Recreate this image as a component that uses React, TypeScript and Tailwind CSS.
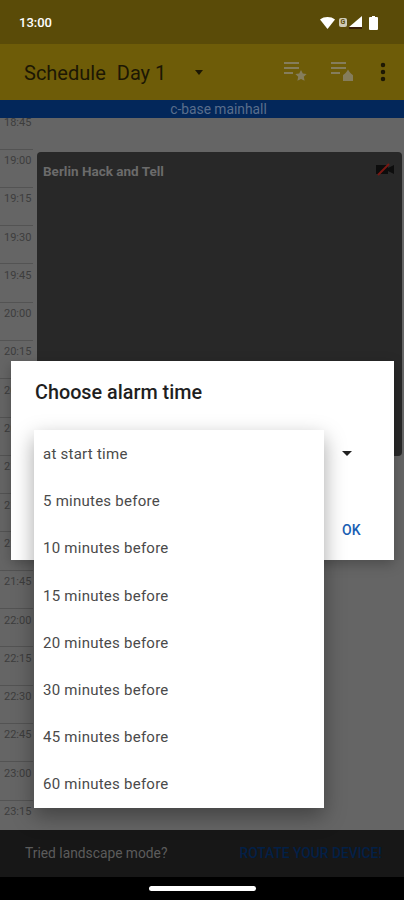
import { MoreVertical } from "lucide-react";

const times = ["19:00","19:15","19:30","19:45","20:00","20:15","20:30","20:45","21:00","21:15","21:30","21:45","22:00","22:15","22:30","22:45","23:00","23:15"];
const options = ["at start time","5 minutes before","10 minutes before","15 minutes before","20 minutes before","30 minutes before","45 minutes before","60 minutes before"];

const StatusIcons = () => (
  <div className="flex items-center gap-[2px]">
    <svg width="15" height="12" viewBox="0 0 15 12"><path d="M0 2.5C4-.8 11-.8 15 2.5L7.5 12z" fill="#fff" /></svg>
    <span className="ml-[2px] flex h-[9px] w-[8px] items-center justify-center rounded-[2px] bg-[#cfcbb8] text-[7px] font-bold leading-none text-[#5a4b08]">G</span>
    <svg width="13" height="13" viewBox="0 0 13 13"><path d="M13 0v11H0z" fill="#fff" /><path d="M0 11h13v2H0z" fill="#3a1f0a" /></svg>
    <svg className="ml-[5px]" width="9" height="14" viewBox="0 0 9 14"><path d="M3 0h3v1h2a1 1 0 0 1 1 1v11a1 1 0 0 1-1 1H1a1 1 0 0 1-1-1V2a1 1 0 0 1 1-1h2z" fill="#fff" /></svg>
  </div>
);

const ListIcon = ({ lock }: { lock?: boolean }) => (
  <svg width="24" height="22" viewBox="0 0 24 22" fill="#857d5c">
    <path d="M1 1h15v2H1zM1 6h15v2H1zM1 11h9v2H1z" />
    {lock ? (
      <path d="M13 20v-5.500c0-1 3-2 5-6 2 4 5 5 5 6V20z" />
    ) : (
      <path d="M18 9l1.800 3.600 3.900.5-2.900 2.700.8 4L18 17.900l-3.600 1.900.8-4-2.900-2.700 3.900-.5z" />
    )}
  </svg>
);

const NoVideoIcon = () => (
  <svg width="20" height="14" viewBox="0 0 20 14">
    <path d="M1 3h12v9H1zM13 6l6-3v9l-6-3z" fill="#0d0d0d" />
    <path d="M3 13L14 2" stroke="#7a1712" strokeWidth="2" />
  </svg>
);

export default function App() {
  return (
    <div className="relative flex h-[900px] w-[404px] flex-col overflow-hidden bg-[#656565] font-['Roboto',sans-serif]">
      <div className="flex h-[44px] shrink-0 items-center justify-between bg-[#5a4b08] pl-[19px] pr-[26px] pt-[1px]">
        <span className="text-[13px] font-medium text-white">13:00</span>
        <StatusIcons />
      </div>

      <div className="flex h-[56px] shrink-0 items-center bg-[#6e5c08] pl-[24px] pr-[9px] text-[#1c1704]">
        <span className="pt-[1px] text-[20px]">Schedule</span>
        <span className="ml-[11px] pt-[1px] text-[20px]">Day 1</span>
        <span className="ml-[29px] h-0 w-0 border-x-[4.500px] border-t-[5px] border-x-transparent border-t-[#1c1704]" />
        <div className="ml-auto flex items-center">
          <ListIcon />
          <span className="ml-[23px]"><ListIcon lock /></span>
          <MoreVertical className="ml-[17px]" size={24} strokeWidth={2.5} />
        </div>
      </div>

      <div className="flex h-[18px] shrink-0 items-center justify-center bg-[#03275a] pl-[33px] pt-[2px] text-[13.800px] leading-none text-[#5a6e8c]">
        c-base mainhall
      </div>

      <div className="flex min-h-0 flex-1">
        <div className="w-[33px] shrink-0">
          <div className="h-[30.500px] pl-[4px] text-[11px] leading-[10px] text-[#3d3d3d]">18:45</div>
          {times.map((t) => (
            <div key={t} className="h-[38.300px] pl-[4px] pt-[6.500px] text-[11px] leading-[12px] text-[#3d3d3d] [box-shadow:inset_0_1px_0_#535353]">
              {t}
            </div>
          ))}
        </div>
        <div className="min-w-0 flex-1 pt-[34px] pl-[4px] pr-[2px]">
          <div className="flex h-[304px] items-start justify-between rounded-[4px] bg-[#282828] pl-[6px] pr-[7px] pt-[10px]">
            <span className="text-[13.500px] font-bold leading-[18px] text-[#6b6b6b]">Berlin Hack and Tell</span>
            <NoVideoIcon />
          </div>
        </div>
      </div>

      <div className="flex h-[47px] shrink-0 items-center justify-between bg-[#171717] pl-[25px] pr-[22px] text-[13.800px]">
        <span className="text-[#5c5c5c]">Tried landscape mode?</span>
        <span className="font-medium text-[#032047]">ROTATE YOUR DEVICE!</span>
      </div>
      <div className="flex h-[23px] shrink-0 items-center justify-center bg-black pb-[1px]">
        <div className="h-[5px] w-[107px] rounded-full bg-white" />
      </div>

      <div className="absolute left-[11px] top-[361px] h-[199px] w-[383px] bg-white shadow-[0_4px_12px_rgba(0,0,0,0.25)]">
        <h2 className="pl-[24px] pt-[20px] text-[19.800px] font-medium leading-[24px] text-[#1f1f1f]">Choose alarm time</h2>
        <span className="absolute left-[331px] top-[90px] h-0 w-0 border-x-[5px] border-t-[5px] border-x-transparent border-t-[#222]" />
        <span className="absolute left-[331px] top-[162px] text-[14px] font-medium leading-none text-[#1a5fb4]">OK</span>
      </div>

      <div className="absolute left-[34px] top-[430px] w-[290px] bg-white pt-[1px] shadow-[0_8px_20px_rgba(0,0,0,0.35)]">
        {options.map((o) => (
          <div key={o} className="flex h-[47.100px] items-center pl-[9px] text-[15px] tracking-[0.25px] text-[#4a4a4a]">{o}</div>
        ))}
      </div>
    </div>
  );
}
